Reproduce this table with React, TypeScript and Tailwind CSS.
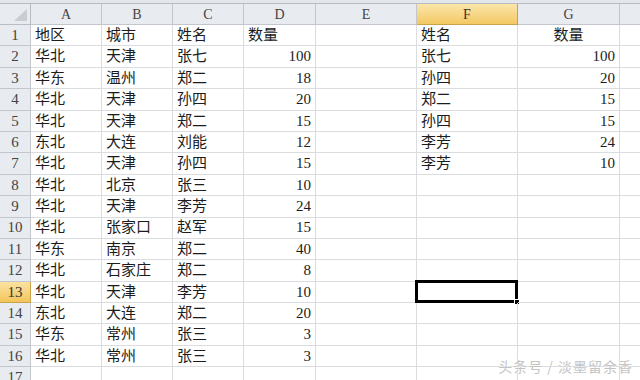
const cols = ["A", "B", "C", "D", "E", "F", "G", ""];

type Cell = string | number;

const rows: Cell[][] = [
  ["地区", "城市", "姓名", "数量", "", "姓名", "数量"],
  ["华北", "天津", "张七", 100, "", "张七", 100],
  ["华东", "温州", "郑二", 18, "", "孙四", 20],
  ["华北", "天津", "孙四", 20, "", "郑二", 15],
  ["华北", "天津", "郑二", 15, "", "孙四", 15],
  ["东北", "大连", "刘能", 12, "", "李芳", 24],
  ["华北", "天津", "孙四", 15, "", "李芳", 10],
  ["华北", "北京", "张三", 10],
  ["华北", "天津", "李芳", 24],
  ["华北", "张家口", "赵军", 15],
  ["华东", "南京", "郑二", 40],
  ["华北", "石家庄", "郑二", 8],
  ["华北", "天津", "李芳", 10],
  ["东北", "大连", "郑二", 20],
  ["华东", "常州", "张三", 3],
  ["华北", "常州", "张三", 3],
  [],
];

const font = { fontFamily: '"Liberation Serif", "Noto Sans CJK SC", serif' };

const App = () => {
  return (
    <div
      className="relative w-[640px] h-[380px] overflow-hidden bg-white text-[#1c1c1c]"
      style={font}
    >
      <div className="h-[4px] bg-[#e3e6ea] border-b border-[#b9bdc3]" />
      <div className="grid grid-cols-[31px_71px_71px_71px_72px_101px_101px_102px_100px] grid-rows-[21px] auto-rows-[21.4px]">
        {/* corner */}
        <div className="flex items-end justify-end p-[3px] bg-[#e8ebef] border-r border-b border-[#b9bdc3]">
          <svg width="13" height="12" viewBox="0 0 13 12">
            <polygon points="13,0 13,12 0,12" fill="#c9ccd1" />
          </svg>
        </div>
        {cols.map((c, i) => (
          <div
            key={c + i}
            className={
              c === "F"
                ? "flex items-center justify-center text-[14px] text-[#333] border-r border-b border-[#c9a24c] bg-linear-to-b from-[#fbe6a8] to-[#f3c862]"
                : "flex items-center justify-center text-[14px] text-[#444] border-r border-b border-[#c3c7cd] bg-[#e8ebef]"
            }
          >
            {c}
          </div>
        ))}

        {rows.map((r, ri) => (
          <RowCells key={ri} index={ri + 1} cells={r} />
        ))}
      </div>

      <div
        className="absolute right-[7px] bottom-[3px] text-[14px] tracking-[1px] text-[#c4c4c4]"
        style={{
          fontFamily: '"Noto Sans CJK SC", sans-serif',
          textShadow: "0 0 2px #fff, 0 0 1px #fff",
        }}
      >
        头条号 / 淡墨留余香
      </div>
    </div>
  );
};

const RowCells = ({ index, cells }: { index: number; cells: Cell[] }) => {
  const selected = index === 13;
  return (
    <>
      <div
        className={
          selected
            ? "flex items-center justify-center text-[15px] text-[#333] border-r border-b border-[#c9a24c] bg-linear-to-b from-[#fbe2a0] to-[#f3c55a]"
            : "flex items-center justify-center text-[15px] text-[#444] border-r border-b border-[#c3c7cd] bg-[#e8ebef]"
        }
      >
        {index}
      </div>
      {Array.from({ length: 8 }).map((_, ci) => {
        const v = cells[ci];
        const isNum = typeof v === "number";
        const center = ci === 6 && index === 1;
        return (
          <div
            key={ci}
            className={
              "relative flex items-center border-r border-b border-[#dadcdf] text-[15px] whitespace-nowrap " +
              (isNum ? "justify-end pr-[4px]" : center ? "justify-center" : "pl-[4px]")
            }
          >
            {v ?? ""}
            {selected && ci === 5 && (
              <div className="absolute -left-[2px] -top-[2px] -right-[1px] -bottom-[1px] border-[3px] border-black">
                <div className="absolute -right-[5px] -bottom-[5px] w-[6px] h-[6px] bg-black border border-white" />
              </div>
            )}
          </div>
        );
      })}
    </>
  );
};

export default App;
